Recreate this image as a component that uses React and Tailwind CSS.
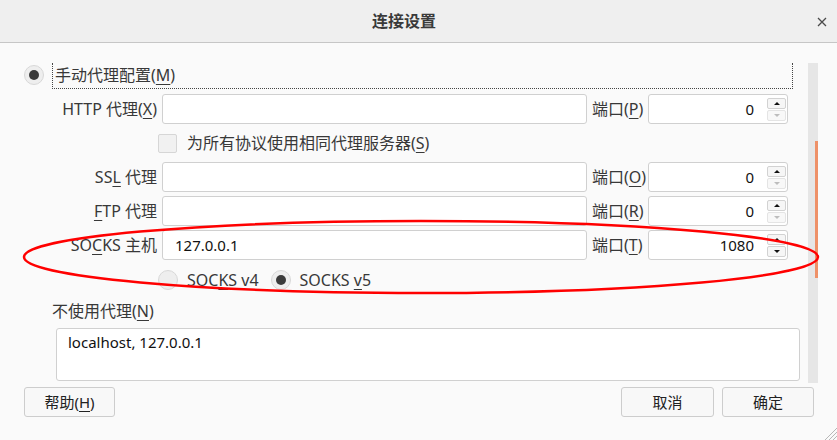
import React from "react";

function U({ children }) {
  return <span className="underline decoration-1 underline-offset-[3px]">{children}</span>;
}

function Radio({ checked }) {
  return (
    <div className="flex h-[20px] w-[20px] shrink-0 items-center justify-center rounded-full border border-[#d8d8d8] bg-[#eeeeee]">
      {checked ? <div className="h-[10px] w-[10px] rounded-full bg-[#3b3b3b]" /> : null}
    </div>
  );
}

function Spinner({ active }) {
  return (
    <div className="ml-[13px] mr-[1px] flex w-[19px] shrink-0 flex-col gap-[1px]">
      <div className="flex h-[11px] items-center justify-center rounded-[2px] border border-[#d2d2d2] bg-[#f6f6f6]">
        <svg width="6" height="3" viewBox="0 0 6 3">
          <polygon points="0,3 3,0 6,3" fill="#111" />
        </svg>
      </div>
      <div
        className={`flex h-[11px] items-center justify-center rounded-[2px] border ${
          active ? "border-[#d2d2d2] bg-[#f6f6f6]" : "border-[#e4e4e4] bg-[#f8f8f8]"
        }`}
      >
        <svg width="6" height="3" viewBox="0 0 6 3">
          <polygon points="0,0 6,0 3,3" fill={active ? "#111" : "#bdbdbd"} />
        </svg>
      </div>
    </div>
  );
}

function ProxyRow({ label, value, portLabel, port, active, className }) {
  return (
    <div className={`flex h-[30px] items-center ${className}`}>
      <div className="w-[157px] shrink-0 text-right leading-[30px]">{label}</div>
      <div className="ml-[5px] flex h-[30px] w-[425px] shrink-0 items-center rounded-[3px] border border-[#d0d0d0] bg-white pl-[12px] text-[15px] text-[#111]">
        {value}
      </div>
      <div className="w-[61px] shrink-0 pl-[5px] leading-[30px]">{portLabel}</div>
      <div className="flex h-[30px] w-[140px] shrink-0 items-center rounded-[3px] border border-[#d0d0d0] bg-white text-[15px] text-[#111]">
        <div className="flex-1 text-right">{port}</div>
        <Spinner active={active} />
      </div>
    </div>
  );
}

function Button({ children, className }) {
  return (
    <button
      type="button"
      className={`flex h-[30px] items-center justify-center rounded-[3px] border border-[#cdcdcd] bg-[#f8f8f8] text-[15px] text-[#222] ${className}`}
    >
      {children}
    </button>
  );
}

export default function App() {
  return (
    <div className="relative h-[440px] w-[837px] overflow-hidden bg-[#fafafa] font-['Noto_Sans','Noto_Sans_CJK_SC',sans-serif] text-[16px] text-[#383838]">
      <header className="relative flex h-[43px] items-center justify-center border-b border-[#c6c6c6] bg-[#efefef] pr-[29px]">
        <span className="text-[16px] font-bold text-[#3a3a3a]">连接设置</span>
        <svg className="absolute right-[10px] top-[17px]" width="10" height="10" viewBox="0 0 10 10">
          <path d="M1 1 L9 9 M9 1 L1 9" stroke="#4a4a4a" strokeWidth="1.3" />
        </svg>
      </header>

      <div className="flex h-[340px] pt-[20px]">
        <div className="w-[808px] shrink-0 overflow-hidden">
          <div className="flex h-[26px] items-center">
            <div className="ml-[24px] -mt-[2px]">
              <Radio checked />
            </div>
            <div className="ml-[8px] flex h-[26px] w-[741px] items-center border-x border-b border-dotted border-[#444] pb-[2px] pl-[2px]">
              手动代理配置(<U>M</U>)
            </div>
          </div>

          <ProxyRow
            className="mt-[5px]"
            label={<>HTTP 代理(<U>X</U>)</>}
            value=""
            portLabel={<>端口(<U>P</U>)</>}
            port="0"
          />

          <div className="mt-[9px] flex h-[20px] items-center">
            <div className="ml-[158px] h-[19px] w-[19px] rounded-[2px] border border-[#d6d6d6] bg-[#f1f1f1]" />
            <span className="ml-[10px]">
              为所有协议使用相同代理服务器(<U>S</U>)
            </span>
          </div>

          <ProxyRow
            className="mt-[9px]"
            label={<>SS<U>L</U> 代理</>}
            value=""
            portLabel={<>端口(<U>O</U>)</>}
            port="0"
          />
          <ProxyRow
            className="mt-[4px]"
            label={<><U>F</U>TP 代理</>}
            value=""
            portLabel={<>端口(<U>R</U>)</>}
            port="0"
          />
          <ProxyRow
            className="mt-[4px]"
            label={<>SO<U>C</U>KS 主机</>}
            value="127.0.0.1"
            portLabel={<>端口(<U>T</U>)</>}
            port="1080"
            active
          />

          <div className="mt-[10px] flex h-[20px] items-center">
            <div className="ml-[158px]">
              <Radio />
            </div>
            <span className="ml-[9px]">
              SOC<U>K</U>S v4
            </span>
            <div className="ml-[12px]">
              <Radio checked />
            </div>
            <span className="ml-[9px]">
              SOCKS <U>v</U>5
            </span>
          </div>

          <div className="ml-[52px] mt-[11px] h-[20px] leading-[20px]">
            不使用代理(<U>N</U>)
          </div>
          <div className="ml-[56px] mt-[7px] h-[53px] w-[744px] rounded-[3px] border border-[#d0d0d0] bg-white pl-[11px] pt-[3px] text-[15px] leading-[20px] text-[#111]">
            localhost, 127.0.0.1
          </div>
        </div>
        <div className="h-[320px] w-[10px] shrink-0 bg-[#e6e6e6]">
          <div className="ml-auto mt-[78px] h-[137px] w-[3px] bg-[#ee9168]" />
        </div>
      </div>

      <div className="mt-[4px] flex items-center justify-between pl-[24px] pr-[23px]">
        <Button className="w-[91px]">
          帮助(<U>H</U>)
        </Button>
        <div className="flex gap-[8px]">
          <Button className="w-[93px]">取消</Button>
          <Button className="w-[92px]">确定</Button>
        </div>
      </div>

      <svg className="absolute bottom-0 right-0" width="14" height="14" viewBox="0 0 14 14">
        <path d="M14 2 L2 14 M14 6 L6 14 M14 10 L10 14" stroke="#b8b8b8" strokeWidth="1" />
      </svg>

      <svg className="pointer-events-none absolute inset-0" width="837" height="440" viewBox="0 0 837 440">
        <ellipse cx="421" cy="257" rx="397" ry="36" fill="none" stroke="#ff0000" strokeWidth="2.5" />
      </svg>
    </div>
  );
}
